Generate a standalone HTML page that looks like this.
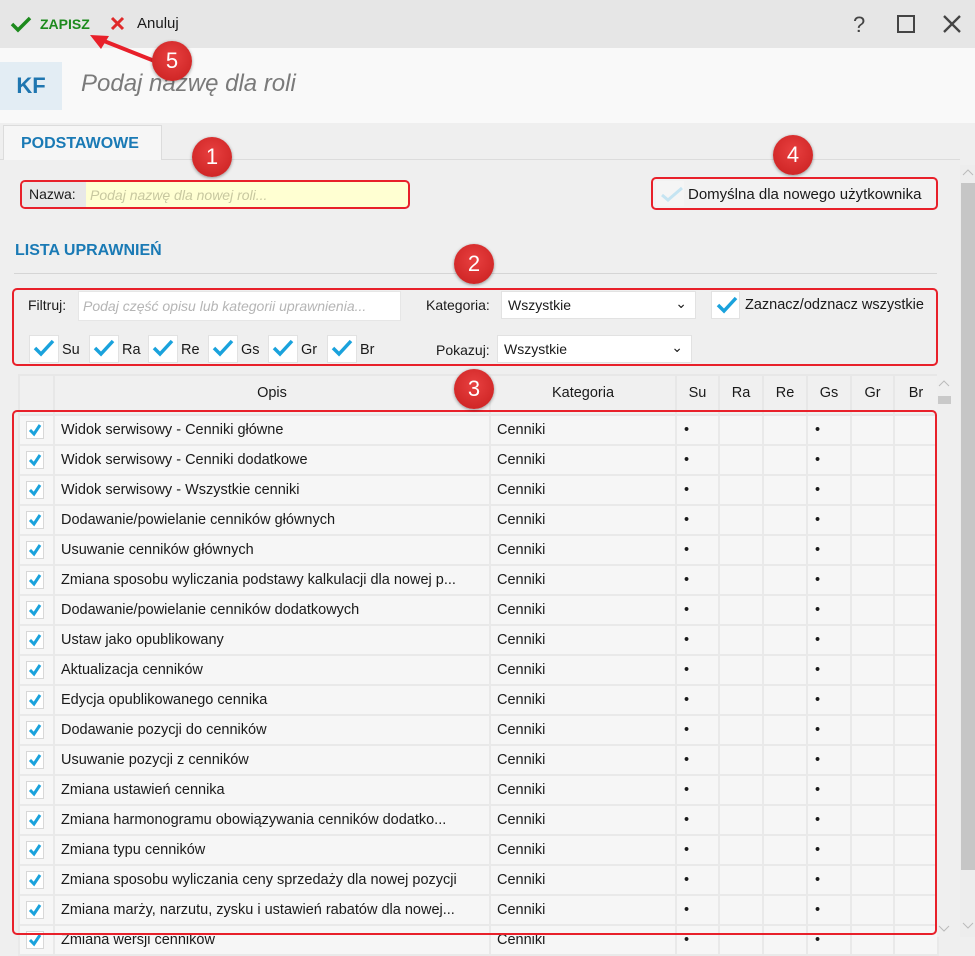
<!DOCTYPE html>
<html><head><meta charset="utf-8"><style>
*{box-sizing:border-box;margin:0;padding:0}
body{width:975px;height:937px;overflow:hidden;position:relative;background:#efefef;font-family:"Liberation Sans","DejaVu Sans",sans-serif;font-size:14px;color:#1a1a1a}
.a{position:absolute}
.top{left:0;top:0;width:975px;height:48px;background:#e6e6e6}
.hdr{left:0;top:48px;width:975px;height:75px;background:#f9f9f9}
.kf{left:0;top:62px;width:62px;height:48px;background:#e3edf4;color:#1f76b0;font-size:22px;font-weight:bold;text-align:center;line-height:48px}
.ttl{left:81px;top:70px;font-size:24px;font-style:italic;color:#7a7a7a}
.tab{left:3px;top:125px;width:159px;height:35px;background:#f6f6f6;border:1px solid #dcdcdc;border-bottom:none;color:#1a7ab5;font-weight:bold;font-size:16px;padding:9px 0 0 17px}
.circ{width:40px;height:40px;border-radius:50%;background:radial-gradient(circle at 50% 40%,#e84040,#c81e1e);color:#fff;font-size:22px;text-align:center;line-height:40px;box-shadow:0 1px 3px rgba(0,0,0,.4)}
.rb{border:2px solid #e8202a;border-radius:5px}
.cb{width:22px;height:22px;background:#fff;border:1px solid #e2e2e2}
.sel{background:#fff;border:1px solid #e2e2e2;height:28px;padding:5px 6px;font-size:14px}
table{border-collapse:collapse;position:absolute;left:18px;top:374px}
td{height:30px;background:#f6f6f6;border:2px solid #e9e9e9;padding:0 6px;white-space:nowrap;overflow:hidden;font-size:14.5px}
th{height:40px;font-weight:normal;background:#f0f0f0;border:2px solid #e7e7e7;font-size:14.5px;padding-bottom:4px}
.dot{padding-left:7px}
.c{width:18px;height:18px;background:#fff;border:1px solid #d8d8d8;margin-left:2px;position:relative}
</style></head><body>
<div class="a top"></div>
<svg class="a" style="left:10px;top:15px" width="22" height="18"><path d="M2 9 L8 15 L20 3" stroke="#1d8a1d" stroke-width="3.5" fill="none"/></svg>
<div class="a" style="left:40px;top:16px;color:#1d8a1d;font-weight:bold;font-size:14px">ZAPISZ</div>
<svg class="a" style="left:110px;top:16px" width="15" height="15"><path d="M2 2L13 13M13 2L2 13" stroke="#e02a2a" stroke-width="3"/></svg>
<div class="a" style="left:137px;top:15px;font-size:15px">Anuluj</div>
<div class="a" style="left:853px;top:12px;font-size:22px;color:#444">?</div>
<div class="a" style="left:897px;top:15px;width:18px;height:18px;border:2px solid #444"></div>
<svg class="a" style="left:942px;top:14px" width="20" height="20"><path d="M2 2L18 18M18 2L2 18" stroke="#444" stroke-width="2.3"/></svg>
<div class="a hdr"></div>
<div class="a kf">KF</div>
<div class="a ttl">Podaj nazwę dla roli</div>
<div class="a" style="left:0;top:159px;width:960px;height:1px;background:#dcdcdc"></div>
<div class="a tab">PODSTAWOWE</div>
<div class="a" style="left:960px;top:165px;width:15px;height:772px;background:#ededed"></div>
<div class="a" style="left:961px;top:183px;width:14px;height:687px;background:#c6c6c6"></div>
<svg class="a" style="left:962px;top:168px" width="12" height="8"><path d="M1 7L6 2L11 7" stroke="#bbb" fill="none"/></svg>
<svg class="a" style="left:962px;top:922px" width="12" height="8"><path d="M1 1L6 6L11 1" stroke="#bbb" fill="none"/></svg>
<div class="a rb" style="left:20px;top:180px;width:390px;height:29px;background:#ffffd2;overflow:hidden">
<div class="a" style="left:0;top:0;width:64px;height:25px;background:#e8e8e8;padding:4px 0 0 7px">Nazwa:</div>
<div class="a" style="left:68px;top:5px;font-style:italic;color:#c8c8a0">Podaj nazwę dla nowej roli...</div></div>
<div class="a rb" style="left:651px;top:177px;width:287px;height:33px;background:#f2f2f2">
<div class="a" style="left:3px;top:2px;width:28px;height:25px;background:#f5f5f5"></div>
<svg class="a" style="left:7px;top:6px" width="24" height="18"><path d="M2 10L8 15L22 3" stroke="#c5e4f2" stroke-width="3" fill="none"/></svg>
<div class="a" style="left:35px;top:7px;font-size:15px">Domyślna dla nowego użytkownika</div></div>
<div class="a" style="left:15px;top:242px;color:#1a7ab5;font-weight:bold;font-size:16px">LISTA UPRAWNIEŃ</div>
<div class="a" style="left:14px;top:273px;width:923px;height:1px;background:#d5d5d5"></div>
<div class="a rb" style="left:12px;top:288px;width:926px;height:78px"></div>
<div class="a" style="left:28px;top:297px">Filtruj:</div>
<div class="a" style="left:78px;top:291px;width:323px;height:30px;background:#fff;border:1px solid #e6e6e6;padding:6px 4px;font-style:italic;color:#b5b5b5;font-size:14px">Podaj część opisu lub kategorii uprawnienia...</div>
<div class="a" style="left:426px;top:297px">Kategoria:</div>
<div class="a sel" style="left:501px;top:291px;width:195px">Wszystkie<span style="position:absolute;right:8px;top:3px">⌄</span></div>
<div class="a cb" style="left:711px;top:291px;width:29px;height:28px"></div>
<svg class="a" style="left:716px;top:296px" width="22" height="18"><path d="M2 9L8 15L20 2" stroke="#1aa2dc" stroke-width="3.5" fill="none"/></svg>
<div class="a" style="left:745px;top:297px;font-size:14.5px">Zaznacz/odznacz wszystkie</div>
<div class="a" style="left:436px;top:342px">Pokazuj:</div>
<div class="a sel" style="left:497px;top:335px;width:195px">Wszystkie<span style="position:absolute;right:8px;top:3px">⌄</span></div>
<div id="perm"></div>
<table>
<tr><th style="width:35px"></th><th style="width:436px">Opis</th><th style="width:186px">Kategoria</th><th style="width:43px">Su</th><th style="width:44px">Ra</th><th style="width:44px">Re</th><th style="width:44px">Gs</th><th style="width:43px">Gr</th><th style="width:44px">Br</th></tr>
<tbody id="tb"></tbody>
</table>
<div class="a" style="left:937px;top:374px;width:16px;height:563px;background:#efefef"></div>
<svg class="a" style="left:938px;top:379px" width="12" height="8"><path d="M1 7L6 2L11 7" stroke="#bbb" fill="none"/></svg>
<div class="a" style="left:938px;top:396px;width:13px;height:8px;background:#c9c9c9"></div>
<svg class="a" style="left:938px;top:925px" width="12" height="8"><path d="M1 1L6 6L11 1" stroke="#bbb" fill="none"/></svg>
<div class="a rb" style="left:12px;top:410px;width:925px;height:525px"></div>
<div class="a circ" style="left:192px;top:137px">1</div>
<div class="a circ" style="left:454px;top:244px">2</div>
<div class="a circ" style="left:454px;top:369px">3</div>
<div class="a circ" style="left:773px;top:135px">4</div>
<svg class="a" style="left:85px;top:28px" width="90" height="50"><path d="M72 34 L14 11" stroke="#e8202a" stroke-width="4"/><path d="M5 7 L24 8 L16 21Z" fill="#e8202a"/></svg>
<div class="a circ" style="left:152px;top:41px">5</div>
<script>
var p='';var labs=['Su','Ra','Re','Gs','Gr','Br'],xs=[29,89,148,208,268,327];
for(var i=0;i<6;i++){p+='<div class="a cb" style="left:'+xs[i]+'px;top:335px;width:30px;height:28px"></div><svg class="a" style="left:'+(xs[i]+4)+'px;top:339px" width="22" height="18"><path d="M2 9L8 15L20 2" stroke="#1aa2dc" stroke-width="3.5" fill="none"/></svg><div class="a" style="left:'+(xs[i]+33)+'px;top:342px;font-size:14.5px">'+labs[i]+'</div>';}
document.getElementById('perm').innerHTML=p;
var r=['Widok serwisowy - Cenniki główne','Widok serwisowy - Cenniki dodatkowe','Widok serwisowy - Wszystkie cenniki','Dodawanie/powielanie cenników głównych','Usuwanie cenników głównych','Zmiana sposobu wyliczania podstawy kalkulacji dla nowej p...','Dodawanie/powielanie cenników dodatkowych','Ustaw jako opublikowany','Aktualizacja cenników','Edycja opublikowanego cennika','Dodawanie pozycji do cenników','Usuwanie pozycji z cenników','Zmiana ustawień cennika','Zmiana harmonogramu obowiązywania cenników dodatko...','Zmiana typu cenników','Zmiana sposobu wyliczania ceny sprzedaży dla nowej pozycji','Zmiana marży, narzutu, zysku i ustawień rabatów dla nowej...','Zmiana wersji cenników'];
var h='';r.forEach(function(t){h+='<tr><td style="padding:0 4px"><div class="c"><svg width="16" height="16" style="position:absolute;left:0;top:0"><path d="M3 8L7 12L13 3" stroke="#1aa2dc" stroke-width="3" fill="none"/></svg></div></td><td>'+t+'</td><td>Cenniki</td><td class="dot">•</td><td></td><td></td><td class="dot">•</td><td></td><td></td></tr>';});
document.getElementById('tb').innerHTML=h;
</script>
</body></html>
